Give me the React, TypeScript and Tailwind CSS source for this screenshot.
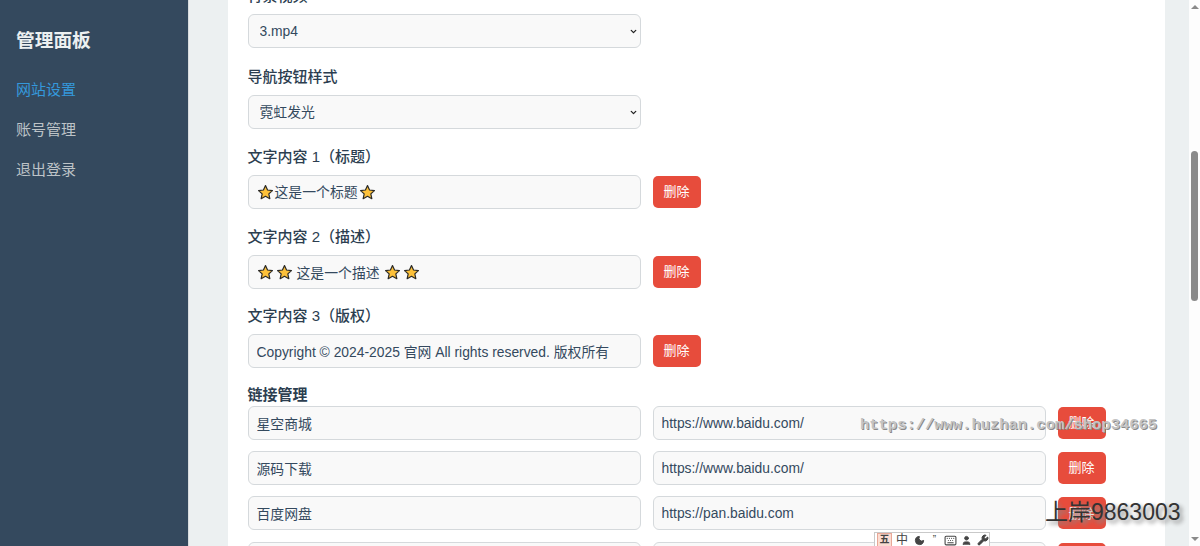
import React from 'react';
import { ChevronDown, Moon, User, Wrench, Keyboard } from 'lucide-react';

const font = 'font-["Liberation_Sans","Noto_Sans_CJK_SC",sans-serif]';
const boxClass = 'h-[34px] w-[393px] shrink-0 rounded-[6px] border border-[#d5d9dc] bg-[#f9f9f9] text-[13.85px] text-[#34495e]';

function Star() {
  return (
    <svg viewBox="0 0 24 24" className="h-[17px] w-[17px] shrink-0">
      <path
        d="M12 2.2l2.9 6.3 6.9.8-5.1 4.7 1.4 6.8-6.100-3.400-6.100 3.400 1.400-6.800-5.100-4.700 6.900-.8z"
        fill="#fdc13a"
        stroke="#2b2a26"
        strokeWidth="1.700"
        strokeLinejoin="round"
      />
    </svg>
  );
}

function DeleteButton() {
  return (
    <button className="h-[32px] w-[48px] shrink-0 rounded-[5px] bg-[#e74c3c] text-[13px] text-white">删除</button>
  );
}

function Field({ label, children, mb }: { label: string; children: React.ReactNode; mb: string }) {
  return (
    <div className={mb}>
      <div className="mb-[7px] h-[22px] text-[15px] leading-[22px] font-medium text-[#2c3e50]">{label}</div>
      {children}
    </div>
  );
}

function SelectBox({ value }: { value: string }) {
  return (
    <div className="relative w-[393px]">
      <select className={`${boxClass} appearance-none px-[11px]`} defaultValue={value}>
        <option>{value}</option>
      </select>
      <ChevronDown size={9} strokeWidth={3.5} className="absolute top-[13px] right-[3px] text-[#222]" />
    </div>
  );
}

function LinkRow({ name, url }: { name: string; url: string }) {
  return (
    <div className="mb-[11.4px] flex items-center gap-3">
      <input readOnly value={name} className={`${boxClass} px-2`} />
      <input readOnly value={url} className={`${boxClass} px-2`} />
      <DeleteButton />
    </div>
  );
}

function ImeBar() {
  return (
    <div className="absolute top-[532px] left-[874px] flex h-[16px] w-[116px] items-center border border-[#c9c9c9] bg-white pl-[2px] text-[#444]">
      <span className="flex h-[14px] w-[15px] items-center justify-center border border-[#e8a897] bg-[#fbdcd2] text-[10px] leading-none font-bold">五</span>
      <span className="ml-[4px] w-[11px] text-[12px] leading-none">中</span>
      <Moon size={11} fill="#444" className="ml-[7px]" />
      <span className="ml-[5px] w-[9px] text-center text-[10px] leading-none">”</span>
      <Keyboard size={13} className="ml-[5px]" />
      <User size={11} fill="#444" className="ml-[4px]" />
      <Wrench size={12} fill="#444" className="ml-[5px]" />
    </div>
  );
}

export default function App() {
  return (
    <div className={`${font} relative flex h-[546px] w-[1200px] overflow-hidden bg-[#ecf0f1]`}>
      {/* Sidebar */}
      <aside className="h-full w-[189px] shrink-0 border-r border-[#d8dcde] bg-[#34495e] px-4 pt-[29px]">
        <h3 className="mb-[26px] text-[18.72px] leading-[24px] font-bold text-[#ecf0f1]">管理面板</h3>
        <nav className="flex flex-col gap-[18px] text-[15px] leading-[22px] text-[#bdc3c7]">
          <a className="text-[#3498db]">网站设置</a>
          <a>账号管理</a>
          <a>退出登录</a>
        </nav>
      </aside>

      {/* Main */}
      <main className="h-full flex-1 pr-[24px] pl-[39px]">
        <div className="h-full overflow-hidden bg-white pl-[19.5px]">
          <div className="-mt-[15px]">
            <Field label="背景视频" mb="mb-[18px]">
              <SelectBox value="3.mp4" />
            </Field>
            <Field label="导航按钮样式" mb="mb-[16.7px]">
              <SelectBox value="霓虹发光" />
            </Field>
            <Field label="文字内容 1（标题）" mb="mb-[17.3px]">
              <div className="flex items-center gap-3">
                <div className={`${boxClass} flex items-center pt-[2px] pl-[8px]`}>
                  <Star />
                  <span className="mx-[1px]">这是一个标题</span>
                  <Star />
                </div>
                <DeleteButton />
              </div>
            </Field>
            <Field label="文字内容 2（描述）" mb="mb-[16px]">
              <div className="flex items-center gap-3">
                <div className={`${boxClass} flex items-center pt-[2px] pl-[8px]`}>
                  <Star />
                  <span className="w-[2px]" />
                  <Star />
                  <span className="mx-[4px]">这是一个描述</span>
                  <Star />
                  <span className="w-[2px]" />
                  <Star />
                </div>
                <DeleteButton />
              </div>
            </Field>
            <Field label="文字内容 3（版权）" mb="mb-[15.7px]">
              <div className="flex items-center gap-3">
                <input readOnly value="Copyright © 2024-2025 官网 All rights reserved. 版权所有" className={`${boxClass} px-2`} />
                <DeleteButton />
              </div>
            </Field>
            <div className="h-[22px] text-[15px] leading-[22px] font-bold text-[#2c3e50]">链接管理</div>
            <LinkRow name="星空商城" url="https://www.baidu.com/" />
            <LinkRow name="源码下载" url="https://www.baidu.com/" />
            <LinkRow name="百度网盘" url="https://pan.baidu.com" />
            <LinkRow name="" url="" />
          </div>
        </div>
      </main>

      {/* Scrollbar */}
      <div className="flex h-full w-[11px] shrink-0 flex-col items-center bg-[#fdfdfd] pt-[5px]">
        <div className="h-0 w-0 border-x-[4px] border-b-[4px] border-x-transparent border-b-[#8a8a8a]" />
        <div className="mt-[142px] h-[150px] w-[7px] rounded-full bg-[#8a8a8a]" />
        <div className="mt-auto mb-[5px] h-0 w-0 border-x-[4px] border-t-[4px] border-x-transparent border-t-[#8a8a8a]" />
      </div>

      {/* Overlays */}
      <div className="absolute top-[415px] left-[860px] font-['Liberation_Mono',monospace] text-[15.47px] leading-[20px] font-bold whitespace-nowrap text-[#c4c4c4] [text-shadow:1px_1px_0_#8a8a8a]">
        https://www.huzhan.com/shop34665
      </div>
      <div className="absolute top-[497px] left-[1045px] text-[23px] leading-[30px] whitespace-nowrap text-[#333] [text-shadow:3px_3px_4px_#888]">
        上岸9863003
      </div>
      <ImeBar />
    </div>
  );
}
